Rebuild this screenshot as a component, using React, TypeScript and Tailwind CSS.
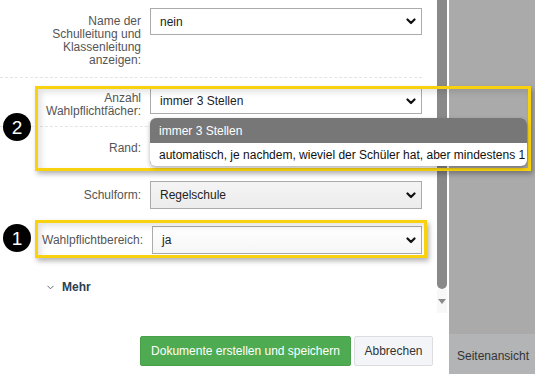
const FONT = "[font-family:'Liberation_Sans',Arial,sans-serif]";

function Chevron() {
  return (
    <svg width="10" height="7" viewBox="0 0 10 7" className="shrink-0">
      <path d="M1.5 1.5 L5 5 L8.5 1.5" fill="none" stroke="#111" strokeWidth="2.2" strokeLinecap="round" strokeLinejoin="round" />
    </svg>
  );
}

function Select({ value, className = "" }: { value: string; className?: string }) {
  return (
    <div
      className={`flex items-center justify-between border border-[#ababab] pl-[9px] pr-[5px] text-[12px] text-[#222] ${className}`}
    >
      <span>{value}</span>
      <Chevron />
    </div>
  );
}

function Badge({ n, top }: { n: number; top: string }) {
  return (
    <div
      className={`absolute left-[3px] ${top} flex h-[28px] w-[28px] items-center justify-center rounded-full bg-black text-[19px] leading-none text-white`}
    >
      {n}
    </div>
  );
}

export default function App() {
  return (
    <div className={`relative flex h-[374px] w-[535px] overflow-hidden bg-white ${FONT}`}>
      <div className="flex w-[449px] flex-col">
        <div className="flex h-[313px]">
          <div className="w-[437px] pt-[8px]">
            <div className="flex items-start">
              <div className="w-[141px] pt-[7px] text-right text-[12px] leading-[13px] text-[#555]">
                Name der
                <br />
                Schulleitung und
                <br />
                Klassenleitung
                <br />
                anzeigen:
              </div>
              <Select value="nein" className="ml-[9px] h-[27px] w-[272px] bg-white" />
            </div>
            <div className="mt-[10px] w-[422px] border-t border-dashed border-[#e4e4e4]" />
            <div className="mt-[10px] flex items-start">
              <div className="w-[141px] pt-[4px] text-right text-[12px] leading-[13px] text-[#555]">
                Anzahl
                <br />
                Wahlpflichtfächer:
              </div>
              <Select value="immer 3 Stellen" className="ml-[9px] h-[26px] w-[272px] bg-white" />
            </div>
            <div className="mt-[8px] w-[422px] border-t border-dashed border-[#e4e4e4]" />
            <div className="mt-[9px] flex items-start">
              <div className="w-[141px] pt-[6px] text-right text-[12px] leading-[13px] text-[#555]">Rand:</div>
              <Select value="" className="ml-[9px] h-[27px] w-[272px] bg-white" />
            </div>
            <div className="mt-[18px] flex items-start">
              <div className="w-[141px] pt-[8px] text-right text-[12px] leading-[13px] text-[#555]">Schulform:</div>
              <Select
                value="Regelschule"
                className="ml-[9px] h-[28px] w-[272px] bg-gradient-to-b from-[#f4f4f4] to-[#ececec]"
              />
            </div>
            <div className="mt-[17px] flex items-start">
              <div className="w-[143px] pt-[8px] text-right text-[12px] leading-[13px] text-[#555]">
                Wahlpflichtbereich:
              </div>
              <Select value="ja" className="ml-[9px] h-[28px] w-[270px] bg-gradient-to-b from-white to-[#f6f6f6]" />
            </div>
            <div className="mt-[27px] flex items-center pl-[47px] text-[12px] leading-[13px]">
              <svg width="7" height="5" viewBox="0 0 7 5" className="mr-[8px]">
                <path d="M0.5 0.8 L3.5 3.8 L6.5 0.8" fill="none" stroke="#667" strokeWidth="1" />
              </svg>
              <span className="font-bold text-[#2c3e50]">Mehr</span>
            </div>
          </div>
          <div className="flex w-[10px] flex-col">
            <div className="h-[289px] rounded-b-[5px] bg-[#898989]" />
            <div className="flex flex-1 justify-center bg-[#f8f8f8] pt-[10px]">
              <div className="h-0 w-0 border-x-[4px] border-t-[5px] border-x-transparent border-t-[#8a8a8a]" />
            </div>
          </div>
          <div className="w-[2px] bg-white" />
        </div>
        <div className="flex flex-1 justify-end gap-[3px] pr-[16px] pt-[23px]">
          <button className="h-[30px] w-[211px] rounded-[2px] border border-[#48a04b] bg-[#4fab51] text-[12px] text-white">
            Dokumente erstellen und speichern
          </button>
          <button className="h-[30px] w-[79px] rounded-[2px] border border-[#dcdde1] bg-[#f4f5f9] text-[12px] text-[#333]">
            Abbrechen
          </button>
        </div>
      </div>
      <div className="flex flex-1 flex-col">
        <div className="flex-1 bg-[#aaaaaa]" />
        <div className="flex h-[40px] items-center overflow-hidden whitespace-nowrap bg-[#b3b4b6] pl-[8px] pt-[4px] text-[12px] text-[#333]">
          Seitenansicht
        </div>
      </div>

      {/* annotations */}
      <div className="absolute left-[35px] top-[86px] h-[85px] w-[496px] border-[3px] border-[#f8d20f] shadow-[2px_3px_5px_rgba(0,0,0,0.3),inset_3px_3px_6px_rgba(0,0,0,0.12)]" />
      <div className="absolute left-[150px] top-[118px] w-[377px] overflow-hidden rounded-[6px] bg-white text-[12px] shadow-[0_2px_4px_rgba(0,0,0,0.3)]">
        <div className="flex h-[25px] items-center bg-[#777777] pl-[9px] text-white">immer 3 Stellen</div>
        <div className="flex h-[23px] items-center whitespace-nowrap pl-[9px] text-[#111]">
          automatisch, je nachdem, wieviel der Schüler hat, aber mindestens 1
        </div>
      </div>
      <div className="absolute left-[35px] top-[220px] h-[38px] w-[392px] border-[3px] border-[#f8d20f] shadow-[2px_3px_5px_rgba(0,0,0,0.3),inset_3px_3px_6px_rgba(0,0,0,0.12)]" />
      <Badge n={2} top="top-[113px]" />
      <Badge n={1} top="top-[224px]" />
    </div>
  );
}
